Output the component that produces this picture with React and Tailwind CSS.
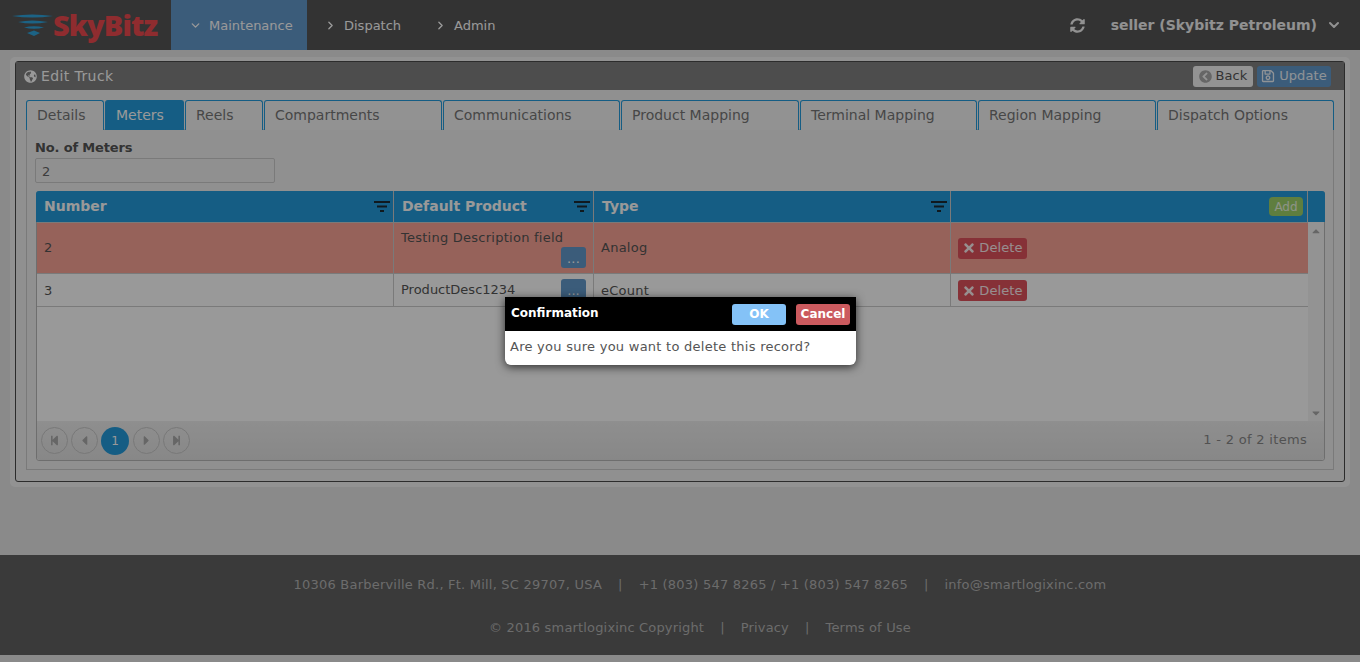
import React from "react";
import { ChevronDown, ChevronRight } from "lucide-react";
import { FaGlobeAmericas, FaChevronCircleLeft, FaRegSave, FaTimes, FaCaretUp, FaCaretDown, FaStepBackward, FaCaretLeft, FaCaretRight, FaStepForward, FaSyncAlt } from "react-icons/fa";

const tabs = [
  ["Details", "w-[78px]"],
  ["Meters", "w-[79px]"],
  ["Reels", "w-[78px]"],
  ["Compartments", "w-[178px]"],
  ["Communications", "w-[177px]"],
  ["Product Mapping", "w-[178px]"],
  ["Terminal Mapping", "w-[177px]"],
  ["Region Mapping", "w-[178px]"],
  ["Dispatch Options", "w-[177px]"],
];

function Filter() {
  return (
    <svg width="16" height="12" viewBox="0 0 16 12" className="text-[#1c2a33]">
      <rect x="0" y="0" width="16" height="2" fill="currentColor" />
      <rect x="3" y="4.5" width="10" height="2" fill="currentColor" />
      <rect x="6" y="9" width="4" height="2" fill="currentColor" />
    </svg>
  );
}

function Logo() {
  return (
    <div className="flex items-center ml-[12px] w-[159px]">
      <svg width="41" height="24" viewBox="0 0 41 24" className="shrink-0 -mt-[1px]">
        <path d="M0 3 Q20 0 41 3 Q20 6 0 3Z" fill="#2fa5de" />
        <path d="M6 9 Q20 6 36 9 Q20 12 6 9Z" fill="#2fa5de" />
        <path d="M12 14.5 Q22 12 32 14.5 Q22 17 12 14.5Z" fill="#2fa5de" />
        <path d="M15 20 L22 17.5 L28 20 L22 23Z" fill="#2fa5de" />
      </svg>
      <span className="font-['Open_Sans',sans-serif] font-extrabold text-[29px] leading-none text-[#ee4a4f] tracking-[-0.9px] -mt-[2px]">SkyBitz</span>
    </div>
  );
}

function NavItem({ label, open, w }) {
  return (
    <div className={`${w} h-full flex items-center ${open ? "bg-[#6399cc] pl-[18px]" : "pl-[17px]"}`}>
      {open ? <ChevronDown size={13} strokeWidth={2.5} className="text-white" /> : <ChevronRight size={13} strokeWidth={2.5} className="text-white" />}
      <span className="ml-[7px] mt-[1px] text-[13px] text-white">{label}</span>
    </div>
  );
}

function DeleteBtn({ className = "" }) {
  return (
    <div className={`w-[69px] h-[21px] rounded-[3px] bg-[#e0525d] text-white/90 flex items-center justify-center gap-[3px] text-[13px] tracking-[0.1px] ${className}`}>
      <FaTimes size={14} />
      Delete
    </div>
  );
}

function DotsBtn({ className = "" }) {
  return (
    <div className={`absolute right-[7px] w-[25px] h-[21px] rounded-[3px] bg-[#6399cc] text-white text-[13px] leading-[24px] text-center ${className}`}>...</div>
  );
}

function PageBtn({ children }) {
  return (
    <div className="w-[27px] h-[27px] rounded-full border border-[#c8c8c8] flex items-center justify-center text-[#ababab]">{children}</div>
  );
}

function Sep() {
  return <span className="mx-[16px]">|</span>;
}

export default function App() {
  return (
    <div className="relative h-[662px] overflow-hidden bg-[#e6e6e6] font-['DejaVu_Sans','Verdana',sans-serif] text-[13px] text-[#555555]">
      <header className="h-[50px] bg-[#555555] flex items-center">
        <Logo />
        <NavItem label="Maintenance" open w="w-[136px]" />
        <NavItem label="Dispatch" w="w-[110px]" />
        <NavItem label="Admin" w="w-[100px]" />
        <div className="ml-auto flex items-center text-[#f2f2f2]">
          <FaSyncAlt size={15} />
          <span className="ml-[26px] font-bold text-[14px]">seller (Skybitz Petroleum)</span>
          <ChevronDown size={16} strokeWidth={3} className="ml-[9px] mr-[18px]" />
        </div>
      </header>

      <main className="h-[505px] pt-[7px] px-[10px]">
        <div className="h-[430px] rounded-[5px] bg-[#f4f4f4] pt-[4px] px-[5px]">
          <div className="h-[421px] rounded-[3px] border border-[#4a4a4a] bg-[#f0f0f0]">
            <div className="h-[28px] bg-[#808080] flex items-center pl-[8px] pr-[13px] text-white">
              <FaGlobeAmericas size={13} />
              <span className="ml-[4px] text-[14px] tracking-[0.4px]">Edit Truck</span>
              <div className="ml-auto flex gap-[4px]">
                <div className="w-[60px] h-[21px] rounded-[3px] bg-[#f6f6f6] text-[#555555] flex items-center justify-center gap-[4px] text-[13px] tracking-[0.1px]">
                  <FaChevronCircleLeft size={13} className="text-[#aaaaaa]" />Back
                </div>
                <div className="w-[74px] h-[21px] rounded-[3px] bg-[#6399cc] text-white/90 flex items-center justify-center gap-[4px] text-[13px] tracking-[0.1px]">
                  <FaRegSave size={14} />Update
                </div>
              </div>
            </div>

            <div className="px-[10px] pt-[10px]">
              <div className="flex h-[30px] gap-[1px]">
                {tabs.map(([t, w], i) => (
                  <div key={t} className={`${w} h-[30px] shrink-0 rounded-t-[3px] border border-b-0 border-[#249cdc] flex items-center pl-[10px] text-[14px] ${i === 1 ? "bg-[#249cdc] text-white" : "bg-[#f4f4f4] text-[#777777]"}`}>
                    {t}
                  </div>
                ))}
              </div>
              <div className="h-[341px] w-[1308px] border border-[#cccccc] -mt-[1px] px-[8px] pt-[10px] bg-[#f0f0f0]">
                <div className="font-bold text-[13px] leading-[15px] tracking-[-0.15px] text-[#555555]">No. of Meters</div>
                <div className="mt-[3px] w-[240px] h-[25px] border border-[#cccccc] rounded-[2px] pl-[6px] pt-[2px] flex items-center text-[#666666]">2</div>
                <div className="mt-[8px] ml-[1px] w-[1289px] h-[270px] border border-[#b8b8b8] rounded-[3px] flex flex-col bg-white">
                  <div className="h-[31px] -mx-[1px] -mt-[1px] bg-[#249cdc] flex text-white font-bold text-[14px] shrink-0 rounded-t-[3px]">
                    {[["Number", "w-[358px]"], ["Default Product", "w-[200px]"], ["Type", "w-[357px]"]].map(([t, w]) => (
                      <div key={t} className={`${w} border-r border-[#cccccc] flex items-center justify-between pl-[8px] pr-[3px]`}>
                        {t}
                        <Filter />
                      </div>
                    ))}
                    <div className="w-[357px] border-r border-[#cccccc] flex items-center justify-end pr-[4px]">
                      <div className="w-[34px] h-[19px] rounded-[4px] bg-[#9ed26a] text-[12px] font-normal flex items-center justify-center text-white/80">Add</div>
                    </div>
                  </div>
                  <div className="flex flex-1 min-h-0">
                    <div className="w-[1271px] flex flex-col">
                      <div className="h-[52px] bg-[#faa396] border-t border-b border-[#cccccc] flex text-[#555555] tracking-[0.25px]">
                        <div className="w-[357px] border-r border-[#cccccc] pl-[7px] flex items-center">2</div>
                        <div className="relative w-[200px] border-r border-[#cccccc] pl-[7px] pt-[5px]">
                          Testing Description field
                          <DotsBtn className="top-[24px]" />
                        </div>
                        <div className="w-[357px] border-r border-[#cccccc] pl-[7px] flex items-center">Analog</div>
                        <div className="pl-[7px] flex items-center"><DeleteBtn /></div>
                      </div>
                      <div className="h-[33px] bg-white border-b border-[#cccccc] flex text-[#555555] tracking-[0.25px]">
                        <div className="w-[357px] border-r border-[#cccccc] pl-[7px] pt-[2px] flex items-center">3</div>
                        <div className="relative w-[200px] border-r border-[#cccccc] pl-[7px] flex items-center tracking-normal">
                          ProductDesc1234
                          <DotsBtn className="top-[5px]" />
                        </div>
                        <div className="w-[357px] border-r border-[#cccccc] pl-[7px] pt-[2px] flex items-center">eCount</div>
                        <div className="pl-[7px] flex items-center"><DeleteBtn className="mt-[1px]" /></div>
                      </div>
                    </div>
                    <div className="w-[16px] h-[199px] flex flex-col items-center justify-between text-[#aaaaaa] pt-[3px] pb-[2px] bg-[#f5f5f5]">
                      <FaCaretUp size={12} />
                      <FaCaretDown size={12} />
                    </div>
                  </div>
                  <div className="h-[39px] shrink-0 flex items-center pl-[4px] pr-[17px] rounded-b-[3px] bg-gradient-to-b from-[#eeeeee] to-[#e2e2e2]">
                    <div className="flex items-center gap-[3px]">
                      <PageBtn><FaStepBackward size={11} /></PageBtn>
                      <PageBtn><FaCaretLeft size={15} /></PageBtn>
                      <div className="w-[28px] h-[28px] rounded-full bg-[#249cdc] text-white flex items-center justify-center text-[12px] mr-[1px]">1</div>
                      <PageBtn><FaCaretRight size={15} /></PageBtn>
                      <PageBtn><FaStepForward size={11} /></PageBtn>
                    </div>
                    <span className="ml-auto -mt-[2px] text-[#888888] text-[13px] tracking-[0.3px]">1 - 2 of 2 items</span>
                  </div>
                </div>
              </div>
            </div>
          </div>
        </div>
      </main>

      <footer className="h-[100px] bg-[#616161] text-[#b4b4b4] text-[13px] flex flex-col items-center pl-[40px]">
        <div className="mt-[22px] leading-[16px] tracking-[0.21px] whitespace-nowrap flex">
          <span>10306 Barberville Rd., Ft. Mill, SC 29707, USA</span>
          <Sep />
          <span>+1 (803) 547 8265 / +1 (803) 547 8265</span>
          <Sep />
          <span>info@smartlogixinc.com</span>
        </div>
        <div className="mt-[27px] leading-[16px] tracking-[0.17px] whitespace-nowrap flex">
          <span>© 2016 smartlogixinc Copyright</span>
          <Sep />
          <span>Privacy</span>
          <Sep />
          <span>Terms of Use</span>
        </div>
      </footer>

      <div className="absolute inset-0 bg-black/40" />

      <div className="absolute left-[505px] top-[297px] w-[351px] h-[68px] rounded-b-[6px] bg-white shadow-[0_2px_10px_rgba(0,0,0,0.7)] overflow-hidden">
        <div className="h-[34px] bg-black flex items-center pl-[6px] pr-[6px]">
          <span className="text-white font-bold text-[12px] -mt-[2px]">Confirmation</span>
          <div className="ml-auto w-[54px] h-[21px] rounded-[3px] bg-[#84c2f7] text-white font-bold text-[12px] flex items-center justify-center">OK</div>
          <div className="ml-[10px] w-[54px] h-[21px] rounded-[3px] bg-[#cb5a5e] text-white font-bold text-[12px] flex items-center justify-center">Cancel</div>
        </div>
        <div className="pl-[5px] pt-[8px] text-[13px] leading-[16px] tracking-[0.26px] text-[#555555]">Are you sure you want to delete this record?</div>
      </div>
    </div>
  );
}
